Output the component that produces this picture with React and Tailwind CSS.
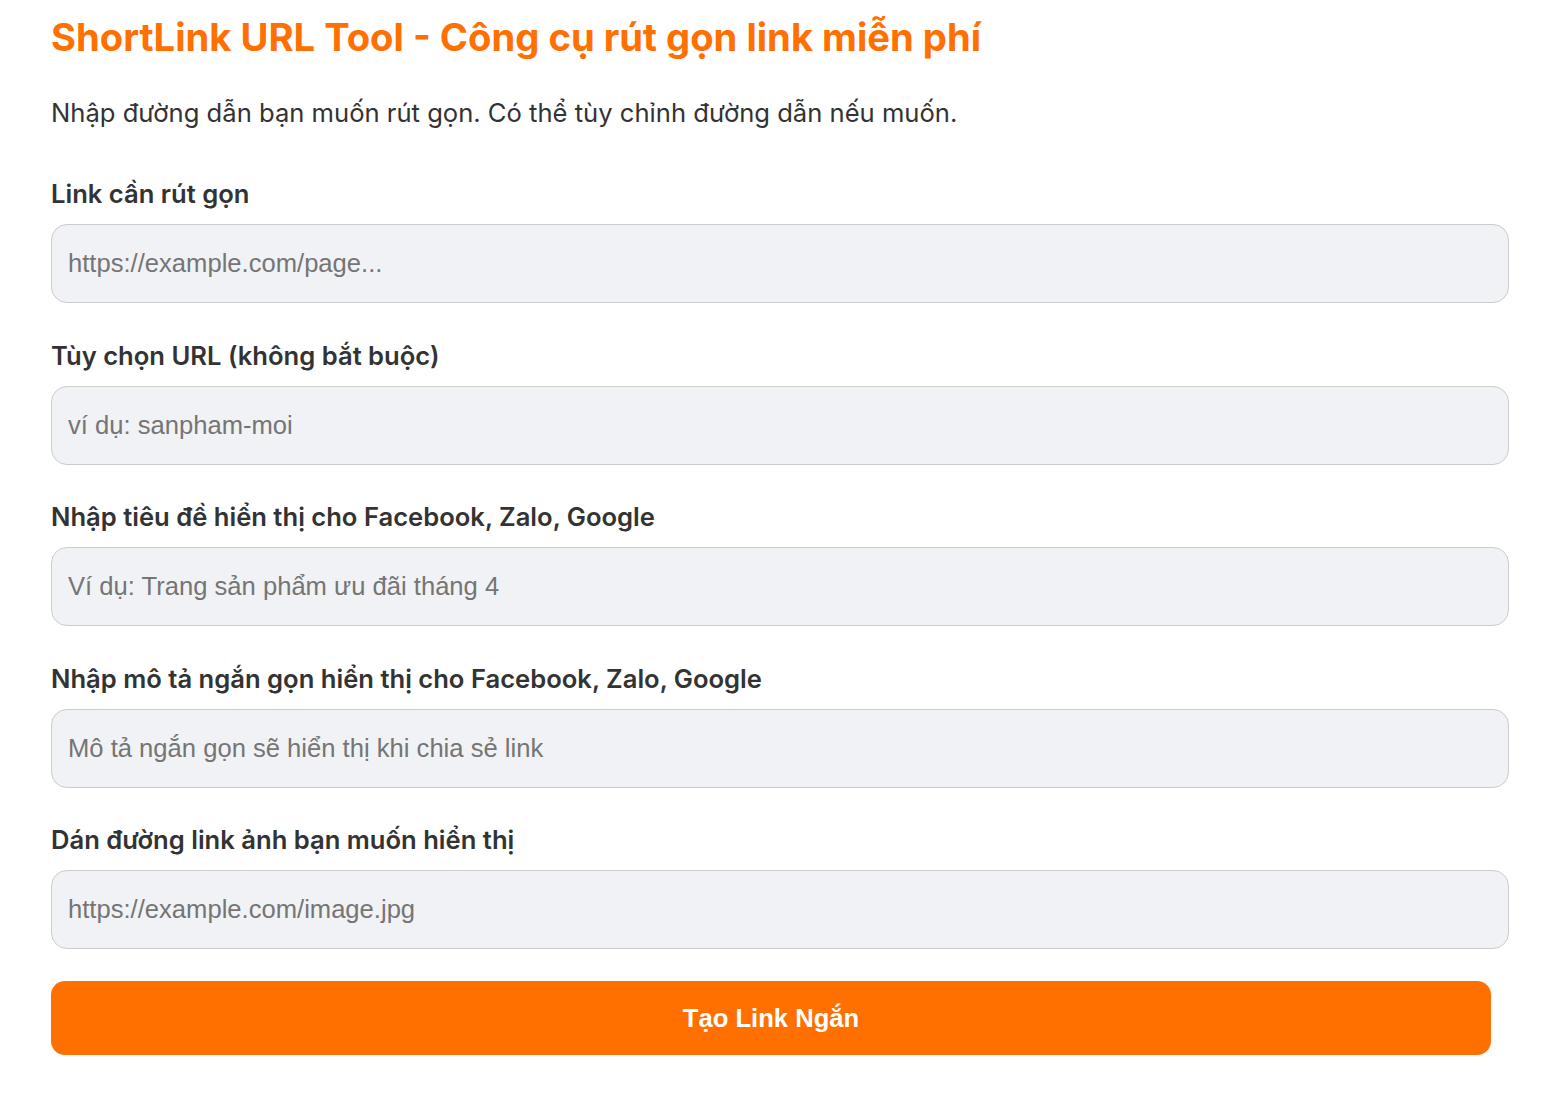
import { useState } from 'react'

// ─── ShortLink form ───

const fields = [
  { label: 'Link cần rút gọn', placeholder: 'https://example.com/page...' },
  { label: 'Tùy chọn URL (không bắt buộc)', placeholder: 'ví dụ: sanpham-moi' },
  { label: 'Nhập tiêu đề hiển thị cho Facebook, Zalo, Google', placeholder: 'Ví dụ: Trang sản phẩm ưu đãi tháng 4' },
  { label: 'Nhập mô tả ngắn gọn hiển thị cho Facebook, Zalo, Google', placeholder: 'Mô tả ngắn gọn sẽ hiển thị khi chia sẻ link' },
  { label: 'Dán đường link ảnh bạn muốn hiển thị', placeholder: 'https://example.com/image.jpg' },
]

export default function App() {
  const [values, setValues] = useState(fields.map(() => ''))

  return (
    <div className="min-h-screen bg-white px-[51px] pt-[13px] font-['Inter','Noto_Sans',sans-serif]">
      <h1 className="text-[38.2px] leading-[48px] font-bold text-[#ff7000]">
        ShortLink URL Tool - Công cụ rút gọn link miễn phí
      </h1>
      <p className="mt-[33px] text-[25.6px] leading-[38px] text-[#333]">
        Nhập đường dẫn bạn muốn rút gọn. Có thể tùy chỉnh đường dẫn nếu muốn.
      </p>

      <div className="mt-[43px] flex flex-col gap-[33.5px]">
        {fields.map((f, i) => (
          <div key={i} className="flex flex-col">
            <label className="text-[25.6px] leading-[38px] font-semibold text-[#333]">{f.label}</label>
            <input
              value={values[i]}
              onChange={(e) => {
                const next = [...values]
                next[i] = e.target.value
                setValues(next)
              }}
              placeholder={f.placeholder}
              className="mt-[11px] w-[1458px] h-[79px] px-4 rounded-2xl border border-[#cccccc] bg-[#f1f2f5] text-[25.6px] text-[#333] placeholder:text-[#757575] font-['Liberation_Sans',Arial,sans-serif] focus:outline-none"
            />
          </div>
        ))}
      </div>

      <button className="mt-[32px] w-[1440px] h-[74px] rounded-[14px] bg-[#ff7000] text-white text-[25.6px] font-bold font-['Liberation_Sans',Arial,sans-serif] cursor-pointer">
        Tạo Link Ngắn
      </button>
    </div>
  )
}
